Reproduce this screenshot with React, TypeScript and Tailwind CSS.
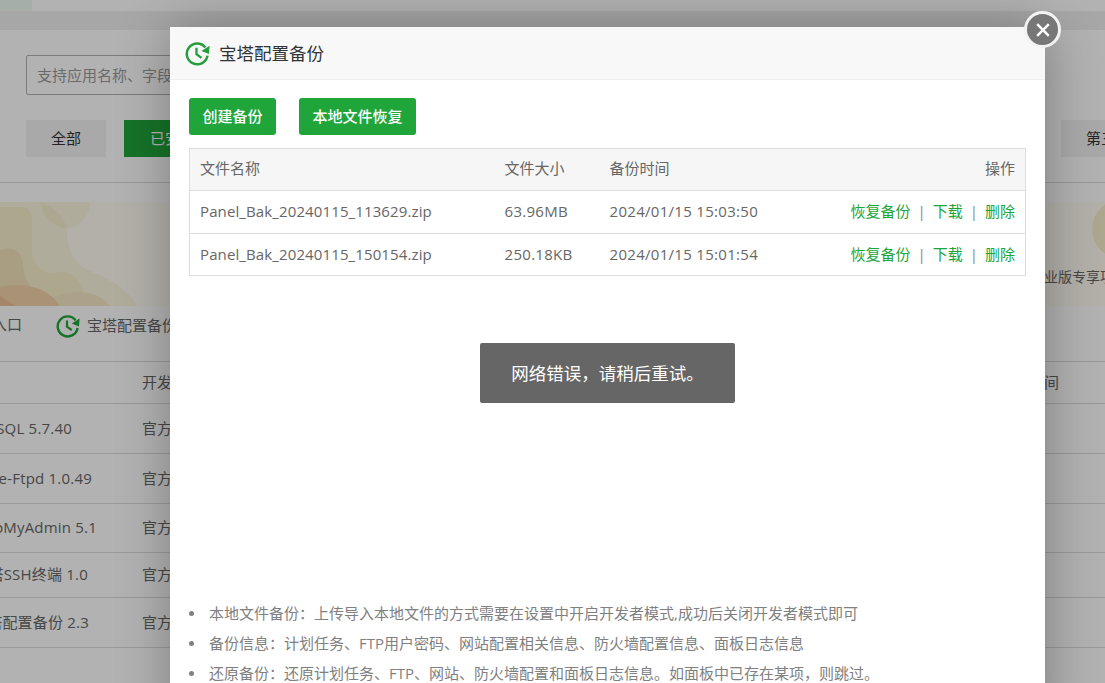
import React from "react";

const font = { fontFamily: '"Open Sans","Noto Sans CJK SC",sans-serif' };

function BackupIcon({ className, color }: { className: string; color: string }) {
  return (
    <svg viewBox="0 0 24 24" className={className} fill="none">
      <path d="M19.6 6.2A10 10 0 1 0 21.6 14" stroke={color} strokeWidth="2.4" />
      <path d="M23.6 4.6 L23 12.4 L15.8 9.6 Z" fill={color} />
      <path d="M11 6.5 V12.6 L15.8 16.2" stroke={color} strokeWidth="2.2" />
    </svg>
  );
}

const bgRows = [
  { name: "MySQL 5.7.40", pr: "pr-[70px]", h: "h-[50px] pb-[1px]" },
  { name: "Pure-Ftpd 1.0.49", pr: "pr-[50px]", h: "h-[50px] pb-[1px]" },
  { name: "phpMyAdmin 5.1", pr: "pr-[45px]", h: "h-[49px] pb-[2px]" },
  { name: "宝塔SSH终端 1.0", pr: "pr-[54px]", h: "h-[45px] pb-[2px]" },
  { name: "宝塔配置备份 2.3", pr: "pr-[53px]", h: "h-[50px] pb-[1px]" },
];

const files = [
  { name: "Panel_Bak_20240115_113629.zip", size: "63.96MB", time: "2024/01/15 15:03:50" },
  { name: "Panel_Bak_20240115_150154.zip", size: "250.18KB", time: "2024/01/15 15:01:54" },
];

const notes = [
  "本地文件备份：上传导入本地文件的方式需要在设置中开启开发者模式,成功后关闭开发者模式即可",
  "备份信息：计划任务、FTP用户密码、网站配置相关信息、防火墙配置信息、面板日志信息",
  "还原备份：还原计划任务、FTP、网站、防火墙配置和面板日志信息。如面板中已存在某项，则跳过。",
];

export default function App() {
  return (
    <div className="relative h-[683px] w-[1105px] overflow-hidden bg-white text-[15px] text-[#666]" style={font}>
      {/* page behind the overlay */}
      <div className="flex h-[11px]">
        <div className="w-[32px] bg-[#eefaf4]" />
        <div className="flex-1 bg-white" />
      </div>
      <div className="h-[19px] bg-[#f0f0f0]" />
      <div className="px-[26px] pt-[25px]">
        <div className="flex h-[40px] w-[500px] items-center rounded-[2px] border border-[#b0b0b0] px-[10px] text-[#999]">
          支持应用名称、字段搜索
        </div>
      </div>
      <div className="flex pl-[26px] pt-[25px]">
        <div className="flex h-[37px] w-[80px] items-center justify-center bg-[#f2f2f2] text-[#333]">全部</div>
        <div className="ml-[18px] flex h-[37px] w-[97px] items-center justify-center bg-[#20a53a] text-white">已安装</div>
        <div className="-mr-[51px] ml-auto flex h-[37px] w-[95px] shrink-0 items-center justify-center bg-[#f2f2f2] text-[#333]">第三方</div>
      </div>
      <div className="mt-[25px] h-px bg-[#ddd]" />
      <div className="relative mt-[19px] flex h-[104px] items-end justify-end overflow-hidden bg-[#fffdf2]">
        <svg viewBox="0 0 1105 104" className="absolute inset-0 h-full w-full">
          <path d="M0 0H90C90 14 80 26 67 26C66 48 76 64 92 70C112 78 128 88 137 104H0Z" fill="#fcf6de" />
          <path d="M40 0C42 14 54 26 67 26C63 14 54 4 40 0Z" fill="#f7f0d0" />
          <path d="M0 5H22C28 5 32 10 32 18V50C32 62 42 72 55 71C72 66 84 78 86 104H0Z" fill="#f8efcc" />
          <path d="M53 96C75 86 98 88 110 104H53Z" fill="#f7e8c4" />
          <path d="M0 48C14 44 22 50 23 62C23 74 30 84 34 88L60 104H0Z" fill="#f4e2ba" />
          <path d="M0 85C28 80 48 86 60 104H0Z" fill="#f2d2a8" />
          <path d="M0 94L16 104H0Z" fill="#eec098" />
          <circle cx="1122" cy="27" r="30" fill="#f8f0cf" />
        </svg>
        <span className="relative -mr-[23px] mb-[19px] text-[14px] text-[#666]">企业版专享项目</span>
      </div>
      <div className="flex h-[55px] items-start pt-[8px]">
        <span className="-ml-[8px] w-[30px] shrink-0 leading-[20px]">入口</span>
        <BackupIcon className="ml-[34px] h-[24px] w-[24px] shrink-0" color="#20a53a" />
        <span className="ml-[7px] leading-[22px]">宝塔配置备份</span>
      </div>
      <div className="flex h-[43px] items-center border-y border-[#ddd] text-[#666]">
        <span className="ml-[142px]">开发商</span>
        <span className="ml-auto pr-[46px]">到期时间</span>
      </div>
      {bgRows.map((r) => (
        <div key={r.name} className={`flex items-center overflow-hidden border-b border-[#ddd] ${r.h}`}>
          <div className={`flex w-[142px] shrink-0 justify-end overflow-hidden whitespace-nowrap tracking-[0.2px] ${r.pr}`}>
            <span className="shrink-0">{r.name}</span>
          </div>
          <span>官方</span>
        </div>
      ))}

      {/* dim overlay */}
      <div className="absolute inset-0 bg-black/30" />

      {/* modal */}
      <div className="absolute left-[170px] top-[27px] h-[700px] w-[875px] bg-white shadow-[1px_1px_50px_rgba(0,0,0,0.3)]">
        <div className="flex h-[53px] items-center border-b border-[#eee] bg-[#f8f8f8] pl-[15px]">
          <BackupIcon className="h-[25px] w-[25px]" color="#259d3c" />
          <span className="ml-[9px] text-[17.5px] text-[#333]">宝塔配置备份</span>
        </div>
        <div className="px-[19px] pt-[18px]">
          <div className="flex gap-[23px]">
            <button className="h-[37px] w-[87px] rounded-[3px] bg-[#20a53a] text-[15px] font-medium text-white">创建备份</button>
            <button className="h-[37px] w-[117px] rounded-[3px] bg-[#20a53a] text-[15px] font-medium text-white">本地文件恢复</button>
          </div>
          <table className="mt-[13px] w-[837px] table-fixed border-collapse border border-[#ddd]">
            <colgroup>
              <col className="w-[305px]" />
              <col className="w-[105px]" />
              <col className="w-[220px]" />
              <col />
            </colgroup>
            <thead>
              <tr className="h-[42px] bg-[#f6f6f6] text-left">
                <th className="pb-[2px] pl-[10px] font-normal">文件名称</th>
                <th className="pb-[2px] pl-[10px] font-normal">文件大小</th>
                <th className="pb-[2px] pl-[10px] font-normal">备份时间</th>
                <th className="pb-[2px] pr-[10px] text-right font-normal">操作</th>
              </tr>
            </thead>
            <tbody>
              {files.map((f, i) => (
                <tr key={f.name} className={`border-t border-[#ddd] ${i === 0 ? "h-[43px]" : "h-[42px]"}`}>
                  <td className={`pl-[10px] tracking-[0.12px] ${i === 0 ? "pb-[2px]" : ""}`}>{f.name}</td>
                  <td className={`pl-[10px] tracking-[0.3px] ${i === 0 ? "pb-[2px]" : ""}`}>{f.size}</td>
                  <td className={`pl-[10px] tracking-[0.3px] ${i === 0 ? "pb-[2px]" : ""}`}>{f.time}</td>
                  <td className={`pr-[10px] text-right whitespace-nowrap text-[#20a53a] ${i === 0 ? "pb-[2px]" : ""}`}>
                    恢复备份<span className="mx-[7px] text-[#888]">|</span>下载<span className="mx-[7px] text-[#888]">|</span>删除
                  </td>
                </tr>
              ))}
            </tbody>
          </table>
          <ul className="mt-[327px] flex flex-col gap-[10px] text-[#808080]">
            {notes.map((n) => (
              <li key={n} className="flex items-center leading-[20px]">
                <span className="mr-[15px] h-[5px] w-[5px] shrink-0 rounded-full bg-[#808080]" />
                {n}
              </li>
            ))}
          </ul>
        </div>
      </div>

      {/* close button */}
      <button className="absolute left-[1024px] top-[11px] flex h-[37px] w-[37px] items-center justify-center rounded-full border-[3.5px] border-[#f2f2f2] bg-[#777]">
        <svg viewBox="0 0 16 16" className="h-[16px] w-[16px]" fill="none">
          <path d="M2.2 2.2L13.8 13.8M13.8 2.2L2.2 13.8" stroke="white" strokeWidth="2.4" />
        </svg>
      </button>

      {/* toast */}
      <div className="absolute left-[480px] top-[343px] flex h-[60px] w-[255px] items-center justify-center rounded-[2px] bg-[#666] text-[17.5px] text-white">
        网络错误，请稍后重试。
      </div>
    </div>
  );
}
